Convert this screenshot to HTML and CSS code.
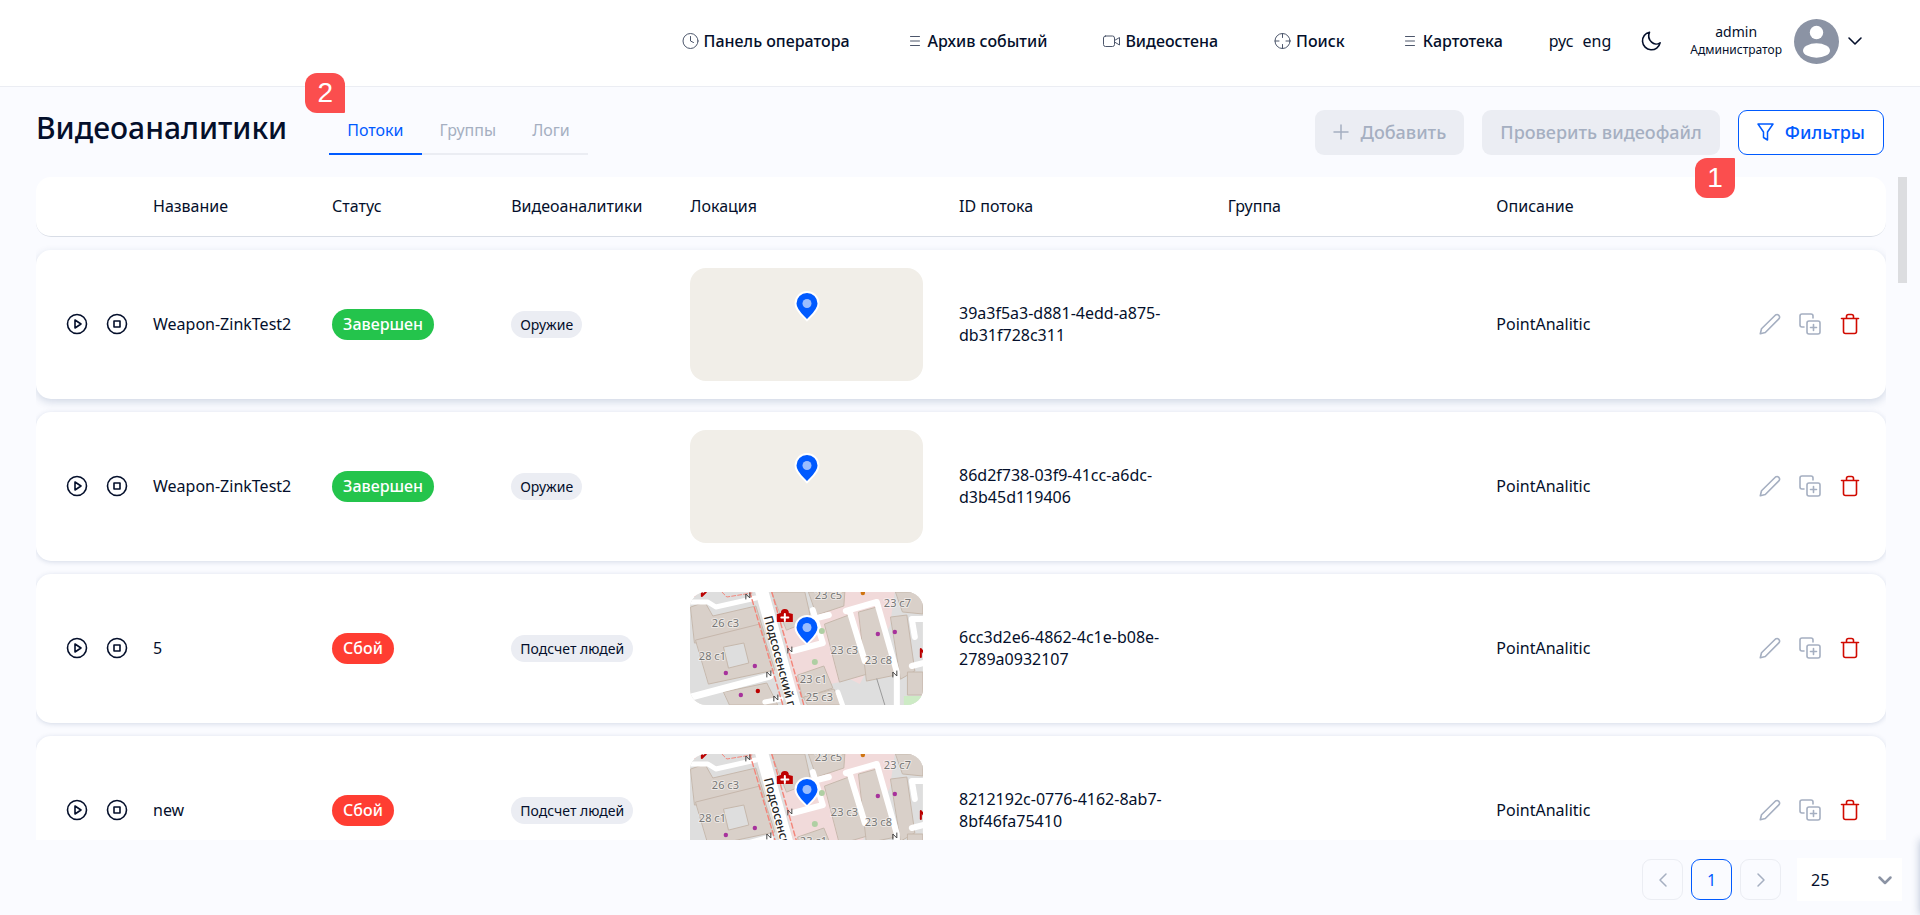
FILE: index.html
```html
<!DOCTYPE html>
<html lang="ru">
	<head>
		<meta charset="UTF-8">
		<title>Видеоаналитики</title>
		<link rel="stylesheet" href="styles.css">
	</head>
	<body>
		<!-- общие иконки -->
		<svg class="sprite" aria-hidden="true">
			<symbol id="i-play" viewBox="0 0 24 24"><circle cx="12" cy="12" r="9.5"/><path d="M10 8v8l6-4z"/></symbol>
			<symbol id="i-stop" viewBox="0 0 24 24"><circle cx="12" cy="12" r="9.5"/><rect x="9" y="9" width="6" height="6"/></symbol>
			<symbol id="i-edit" viewBox="0 0 24 24"><path d="M2.300 21.700l1.200-5L17.500 3a2.600 2.600 0 0 1 3.600 3.600L7.300 20.500z"/></symbol>
			<symbol id="i-copy" viewBox="0 0 24 24"><path d="M6 15H4a2 2 0 0 1-2-2V4a2 2 0 0 1 2-2h9a2 2 0 0 1 2 2v2"/><rect x="9" y="9" width="13" height="13" rx="2"/><path d="M15.500 12.500v6M12.500 15.500h6"/></symbol>
			<symbol id="i-trash" viewBox="0 0 24 24"><path d="M3.500 6.500h17M5.500 6.500v13a2 2 0 0 0 2 2h9a2 2 0 0 0 2-2v-13M8.500 6.500v-2a2 2 0 0 1 2-2h3a2 2 0 0 1 2 2v2"/></symbol>
			<symbol id="i-list" viewBox="0 0 18 18"><path d="M4.500 4.500h9M4.500 9h9M4.500 13.500h9"/></symbol>
			<symbol id="i-pin" viewBox="0 0 26 32"><path class="pin-body" d="M13 29.500C10 25.500 1.500 20 1.500 12.500a11.500 11.500 0 0 1 23 0C24.500 20 16 25.500 13 29.500z"/><circle class="pin-dot" cx="13" cy="12.500" r="4.500"/></symbol>
		</svg>

		<!-- карта города -->
		<template id="map-city">
			<svg class="map-bg" viewBox="0 0 233 113" preserveAspectRatio="xMidYMid slice">
				<rect width="233" height="113" fill="#dedede"/>
				<!-- розовые зоны -->
				<path d="M92 34L130 20 150 90 106 100zM120 0h85l-5 34-30 58-20-10zM110 70l38-8 8 26-32 8z" fill="#f1dada"/>
				<!-- здания -->
				<g fill="#d9d0c9" stroke="#c6b8ac" stroke-width="1">
					<path d="M1 15l14-5 8 14 43-10 9 29-70 8z"/>
					<path d="M6 48l64-16 15 46-66 14z"/>
					<path d="M82 0h33l5 22-3 8-20 8z"/>
					<path d="M119 0h36l-1 14-27 9z"/>
					<path d="M135 32l24-9 22 58-31 9z"/>
					<path d="M169 20l18-5 19 68-29 6z"/>
					<path d="M201 25l16-2 8 56-14 8z"/>
					<path d="M108 83l26-9 9 22-30 10z"/>
					<path d="M34 100l43-9 11 22H40z"/>
					<path d="M114 105l30-8 8 16h-34z"/>
					<path d="M218 80h15v23h-15z"/>
					<path d="M206 0h27v22l-20-2z"/>
				</g>
				<path d="M34 55l20-4 5 20-20 5z" fill="#dedede" stroke="#c6b8ac"/>
				<path d="M214 104h19v9h-19z" fill="#cdebc5"/>
				<!-- дороги -->
				<g fill="none" stroke="#fff" stroke-linejoin="round" stroke-linecap="round">
					<path d="M71-4l34 121" stroke-width="13"/>
					<path d="M-2 106l82-22" stroke-width="7"/>
					<path d="M0 10l18 0 8 5 40-9" stroke-width="5"/>
					<path d="M103 59l30-8-10-33M127 26l12-3" stroke-width="6"/>
					<path d="M156 19l31-9 20 70v36" stroke-width="6"/>
					<path d="M160 20l15 49" stroke-width="6"/>
					<path d="M234 27h-12l3 18M222 74l12-3" stroke-width="6"/>
					<path d="M148 100l5 14M75 110l16-3" stroke-width="5"/>
				</g>
				<path d="M60 0l33 113M82 0l32 113" fill="none" stroke="#f3857a" stroke-width="1.400" stroke-dasharray="5 3"/>
				<path d="M32 0l5 5 25-4" fill="none" stroke="#f3857a" stroke-dasharray="4 2"/>
				<path d="M187 87l8 26" fill="none" stroke="#999"/>
				<g fill="#a7329c"><circle cx="36" cy="81" r="2.200"/><circle cx="65" cy="74" r="2.200"/><circle cx="51" cy="103" r="2.200"/><circle cx="188" cy="42" r="2.200"/><circle cx="205" cy="40" r="2.200"/></g>
				<circle cx="68" cy="99" r="2.200" fill="#b00"/>
				<circle cx="173" cy="1" r="2.200" fill="#cf7411"/>
				<g fill="#afcfa3"><circle cx="125" cy="70" r="3"/><circle cx="132" cy="39" r="3"/></g>
				<path d="M87 30V22l4-1a4 4 0 0 1 8 0l4 1v8z" fill="#bf0000"/>
				<path d="M95 22v7M91.500 25.500h7" stroke="#fff" stroke-width="2"/>
				<path d="M56 7V2l4 4V1M98 61v-5l4 4v-5M77 85v-5l4 4v-5M84 109v-5l4 4v-5M203 85v-5l4 4v-5" fill="none" stroke="#444" stroke-width="1"/>
				<g class="map-houses">
					<text x="22" y="35">26 с3</text><text x="9" y="68">28 с1</text><text x="125" y="7">23 с5</text><text x="194" y="15">23 с7</text>
					<text x="141" y="62">23 с3</text><text x="175" y="72">23 с8</text><text x="110" y="91">23 с1</text><text x="116" y="109">25 с3</text>
				</g>
				<text class="map-street" transform="translate(74 25) rotate(75)">Подсосенский п</text>
				<path d="M4 4V0M4 4l4-4M12 4V0M12 4l4-4M231 65v-8l3 4" fill="none" stroke="#b00" stroke-width="2"/>
			</svg>
		</template>

		<header class="header">
			<nav class="nav">
				<a href="#"><svg class="icon18" viewBox="0 0 18 18"><circle cx="8.500" cy="9" r="7.500"/><path d="M8.500 4.500V9l3 1.500"/></svg>Панель оператора</a>
				<a href="#"><svg class="icon18"><use href="#i-list"/></svg>Архив событий</a>
				<a href="#"><svg class="icon18" viewBox="0 0 18 18"><rect x="0.500" y="4" width="11" height="10.500" rx="2"/><path d="M11.500 8.500L16.500 5.500v7.500l-5-3"/></svg>Видеостена</a>
				<a href="#"><svg class="icon18" viewBox="0 0 18 18"><circle cx="8.500" cy="9" r="7.500"/><path d="M8.500 1.500v4M8.500 12.500v4M1 9h4M12 9h4"/></svg>Поиск</a>
				<a href="#"><svg class="icon18"><use href="#i-list"/></svg>Картотека</a>
			</nav>
			<div class="langs">
				<a href="#">рус</a>
				<a href="#">eng</a>
			</div>
			<button class="theme" type="button" aria-label="Тема"><svg viewBox="0 0 24 24"><path d="M10.500 3.200a8.900 8.900 0 1 0 10.600 10.600c-2.600 1.800-6.200 1.600-8.500-.6-2.600-2.500-3.600-6.500-2.100-10z"/></svg></button>
			<div class="user">
				<div class="user-name">
					<span>admin</span>
					<small>Администратор</small>
				</div>
				<svg class="avatar" viewBox="0 0 45 45"><circle cx="22.500" cy="22.500" r="22.500"/><circle cx="22.500" cy="13.500" r="6.700" fill="#fff"/><ellipse cx="22.500" cy="31.500" rx="13.500" ry="7.200" fill="#fff"/></svg>
				<button class="user-more" type="button" aria-label="Меню"><svg viewBox="0 0 16 16"><path d="M2 5l6 6 6-6"/></svg></button>
			</div>
		</header>

		<main class="main">
			<div class="top">
				<h1>Видеоаналитики</h1>
				<div class="tabs">
					<button class="tab active" type="button">Потоки</button>
					<button class="tab" type="button">Группы</button>
					<button class="tab" type="button">Логи</button>
					<span class="mark mark-2">2</span>
				</div>
				<div class="buttons">
					<button class="btn" type="button" disabled><svg viewBox="0 0 18 18"><path d="M8 2v14M1 9h14"/></svg>Добавить</button>
					<button class="btn" type="button" disabled>Проверить видеофайл</button>
					<button class="btn btn-filter" type="button"><svg viewBox="0 0 18 18"><path d="M1 1h15L10.500 9v8l-4-2.500V9z"/></svg>Фильтры<span class="mark mark-1">1</span></button>
				</div>
			</div>

			<div class="list">
				<div class="list-view">
					<table class="streams">
						<thead>
							<tr>
								<th></th>
								<th>Название</th>
								<th>Статус</th>
								<th>Видеоаналитики</th>
								<th>Локация</th>
								<th>ID потока</th>
								<th>Группа</th>
								<th>Описание</th>
								<th></th>
							</tr>
						</thead>
						<tbody id="rows"></tbody>
					</table>
				</div>
				<div class="scroll"><div class="thumb"></div></div>
			</div>
		</main>

		<footer class="footer">
			<button class="page" type="button" aria-label="Назад"><svg viewBox="0 0 16 16"><path d="M11 2L5 8l6 6"/></svg></button>
			<button class="page current" type="button">1</button>
			<button class="page" type="button" aria-label="Вперед"><svg viewBox="0 0 16 16"><path d="M5 2l6 6-6 6"/></svg></button>
			<div class="size">
				<select aria-label="Строк на странице">
					<option>25</option>
				</select>
				<svg viewBox="0 0 16 16"><path d="M2.500 5.500L8 11l5.500-5.500"/></svg>
			</div>
		</footer>
		<!-- закрытая боковая панель -->
		<aside class="drawer"></aside>
		<script src="script.js"></script>
	</body>
</html>
```
FILE: styles.css
```css
*{
	margin: 0;
	padding: 0;
	box-sizing: border-box;
}
html,body{
	height: 100%;
}
body{
	display: flex;
	flex-direction: column;
	overflow: hidden;
	font: 16px/22px "Noto Sans", sans-serif;
	color: #040f2b;
	background-color: #fafbff;
}
a{
	color: inherit;
	text-decoration: none;
}
button,select{
	font: inherit;
	color: inherit;
	border: none;
	background: none;
}
svg{
	flex-shrink: 0;
	fill: none;
	stroke: currentColor;
	stroke-linecap: round;
	stroke-linejoin: round;
}
.sprite{
	position: absolute;
	width: 0;
	height: 0;
}
/*шапка*/
.header{
	display: flex;
	align-items: center;
	justify-content: flex-end;
	height: 87px;
	padding: 0 57px 4px 36px;
	background-color: #fff;
	border-bottom: 1px solid #ebedf3;
}
.nav{
	display: flex;
	gap: 56px;
	margin-right: 46px;
}
.nav a{
	display: flex;
	align-items: center;
	gap: 4px;
	font-weight: 500;
}
.icon18{
	width: 18px;
	height: 18px;
	color: #4c566b;
}
.langs{
	display: flex;
	gap: 9px;
}
.theme{
	display: flex;
	margin: 0 27px 0 28px;
}
.theme svg{
	width: 24px;
	height: 24px;
	stroke-width: 1.6;
}
.user{
	display: flex;
	align-items: center;
}
.user-name{
	display: flex;
	flex-direction: column;
	align-items: center;
	margin-right: 12px;
	font-size: 14px;
	line-height: 18px;
}
.user-name small{
	font-size: 12px;
}
.avatar{
	width: 45px;
	height: 45px;
	fill: #8b93a4;
	stroke: none;
}
.user-more{
	display: flex;
	margin-left: 8px;
}
.user-more svg{
	width: 16px;
	height: 16px;
	stroke-width: 1.6;
}
/*заголовок и вкладки*/
.main{
	display: flex;
	flex: 1;
	flex-direction: column;
	min-height: 0;
}
.top{
	display: flex;
	align-items: flex-start;
	padding: 23px 36px 22px;
}
h1{
	font-size: 30px;
	font-weight: 500;
	line-height: 36px;
}
.tabs{
	position: relative;
	display: flex;
	margin-left: 42px;
}
.tab{
	height: 45px;
	padding: 0 18px 4px;
	color: #a5afc1;
	border-bottom: 2px solid #ebedf3;
}
.tab.active{
	color: #005aff;
	border-color: #005aff;
}
.buttons{
	display: flex;
	gap: 18px;
	margin-left: auto;
}
.btn{
	position: relative;
	display: flex;
	align-items: center;
	gap: 10px;
	height: 45px;
	padding: 0 18px 2px;
	font-size: 18px;
	font-weight: 500;
	color: #a5afc1;
	background-color: #ebedf3;
	border-radius: 9px;
}
.btn svg{
	width: 18px;
	height: 18px;
	stroke-width: 1.5;
}
.btn-filter{
	color: #005aff;
	background-color: #fff;
	border: 1px solid #005aff;
}
/*красные метки*/
.mark{
	position: absolute;
	width: 40px;
	height: 40px;
	font: 28px/40px "Liberation Sans", sans-serif;
	text-align: center;
	color: #fff;
	background-color: #fb4e4e;
	border-radius: 12px;
}
.mark-1{
	right: 148px;
	top: 47px;
	border-top-right-radius: 1px;
}
.mark-2{
	left: -24px;
	top: -37px;
	border-bottom-right-radius: 1px;
}
/*таблица*/
.list{
	display: flex;
	flex: 1;
	gap: 12px;
	min-height: 0;
	padding: 0 13px 0 36px;
}
.list-view{
	flex: 1;
	overflow: hidden;
}
.scroll{
	width: 9px;
}
.thumb{
	height: 16%;
	background-color: #dcdde0;
}
.streams,.streams thead{
	display: block;
}
.streams tbody{
	display: flex;
	flex-direction: column;
	gap: 13px;
	margin-top: 13px;
}
.streams tr{
	display: grid;
	grid-template-columns: 117px repeat(3, 2fr) repeat(4, 3fr) 121px;
	align-items: center;
	background-color: #fff;
	border-radius: 15px;
}
.streams thead tr{
	height: 60px;
	padding-bottom: 1px;
	border-bottom: 1px solid #d8dde6;
}
.streams tbody tr{
	height: 149px;
	box-shadow: 0 1px 5px rgba(30, 60, 110, .17);
}
.streams tbody tr:first-child{
	box-shadow: 0 3px 8px rgba(30, 60, 110, .18);
}
.streams th{
	font-weight: 400;
	text-align: left;
}
.streams td{
	padding: 0 36px 1px 0;
}
.streams .run,.streams .actions{
	display: flex;
}
.streams .run{
	gap: 16px;
	padding: 0 0 1px 29px;
}
.streams .actions{
	justify-content: flex-end;
	gap: 16px;
	padding: 0 24px 1px 0;
}
.streams td button{
	display: flex;
}
.streams td button svg{
	width: 24px;
	height: 24px;
	stroke-width: 1.6;
}
.actions button{
	color: #a5afc1;
}
.streams .remove{
	color: #d10a00;
}
.status,.tag{
	display: inline-block;
	white-space: nowrap;
	color: #fff;
	border-radius: 16px;
}
.status{
	padding: 4px 11px;
	font-weight: 500;
	line-height: 23px;
}
.done{
	background-color: #24c44c;
}
.fail{
	background-color: #ff3d32;
}
.tag{
	padding: 0 9px;
	font-size: 14px;
	line-height: 27px;
	color: #040f2b;
	background-color: #ebedf3;
}
/*карта*/
.map{
	position: relative;
	height: 113px;
	overflow: hidden;
	background-color: #f1eee8;
	border-radius: 16px;
}
.map-bg{
	display: block;
	width: 100%;
	height: 100%;
	stroke: none;
}
.pin{
	position: absolute;
	left: 50%;
	top: 23px;
	width: 26px;
	height: 32px;
	margin-left: -13px;
}
.pin-body{
	fill: #005aff;
	stroke: #fff;
	stroke-width: 2;
}
.pin-dot{
	fill: #99bdff;
	stroke: none;
}
.map-houses{
	font-size: 11px;
	fill: #777;
	stroke: rgba(255, 255, 255, .5);
	stroke-width: 2;
	paint-order: stroke;
}
.map-street{
	font-size: 12px;
	font-weight: 500;
	fill: #222;
}
/*пагинация*/
.footer{
	display: flex;
	align-items: center;
	justify-content: flex-end;
	gap: 8px;
	height: 75px;
	padding: 4px 18px 0;
}
.page{
	display: flex;
	align-items: center;
	justify-content: center;
	width: 41px;
	height: 41px;
	color: #a5afc1;
	border: 1px solid #ebedf3;
	border-radius: 9px;
}
.page svg{
	width: 16px;
	height: 16px;
	stroke-width: 1.5;
}
.page.current{
	color: #005aff;
	border-color: #005aff;
}
.size{
	position: relative;
	margin-left: 8px;
}
.size select{
	appearance: none;
	width: 105px;
	height: 43px;
	padding: 0 14px;
	background-color: #fff;
}
.size svg{
	position: absolute;
	right: 9px;
	top: 14px;
	width: 16px;
	height: 16px;
	color: #8b93a4;
	stroke-width: 2.5;
}
.drawer{
	position: fixed;
	left: 100%;
	bottom: 0;
	width: 300px;
	height: 75px;
	box-shadow: 0 0 8px rgba(30, 60, 110, .3);
}
```
FILE: script.js
```js
var rows = [
	{name: 'Weapon-ZinkTest2', ok: true, tag: 'Оружие', id: '39a3f5a3-d881-4edd-a875-db31f728c311'},
	{name: 'Weapon-ZinkTest2', ok: true, tag: 'Оружие', id: '86d2f738-03f9-41cc-a6dc-d3b45d119406'},
	{name: '5', ok: false, tag: 'Подсчет людей', id: '6cc3d2e6-4862-4c1e-b08e-2789a0932107'},
	{name: 'new', ok: false, tag: 'Подсчет людей', id: '8212192c-0776-4162-8ab7-8bf46fa75410'}
];
var city = document.getElementById('map-city').innerHTML;
function btn(icon, title, cls){
	return '<button type="button" class="' + cls + '" aria-label="' + title + '"><svg><use href="#i-' + icon + '"/></svg></button>';
}
var html = '';
rows.forEach(function(r){
	html += '<tr>' +
		'<td class="run">' + btn('play', 'Запустить', '') + btn('stop', 'Остановить', '') + '</td>' +
		'<td>' + r.name + '</td>' +
		'<td><span class="status ' + (r.ok ? 'done">Завершен' : 'fail">Сбой') + '</span></td>' +
		'<td><span class="tag">' + r.tag + '</span></td>' +
		'<td><div class="map">' + (r.ok ? '' : city) +
		'<svg class="pin"><use href="#i-pin"/></svg></div></td>' +
		'<td>' + r.id + '</td>' +
		'<td></td>' +
		'<td>PointAnalitic</td>' +
		'<td class="actions">' + btn('edit', 'Изменить', '') + btn('copy', 'Копировать', '') + btn('trash', 'Удалить', 'remove') + '</td>' +
		'</tr>';
});
document.getElementById('rows').innerHTML = html;
```
